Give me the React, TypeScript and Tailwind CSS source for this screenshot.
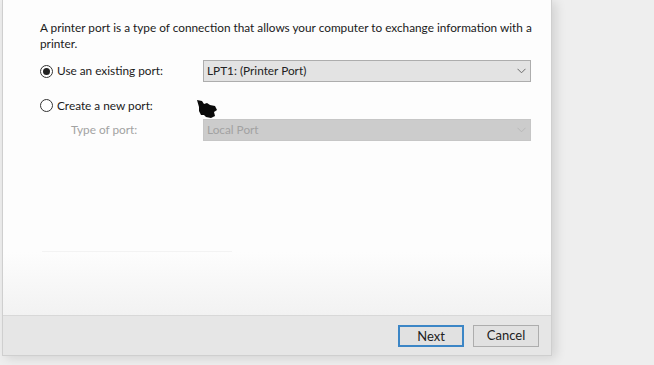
import React from 'react';

function Radio({ checked }: { checked?: boolean }) {
  return (
    <span className="flex h-[13px] w-[13px] items-center justify-center rounded-full border border-[#333] bg-white">
      {checked && <span className="h-[7px] w-[7px] rounded-full bg-[#222]" />}
    </span>
  );
}

function Chevron({ color }: { color: string }) {
  return (
    <svg width="9" height="6" viewBox="0 0 9 6" fill="none">
      <path d="M0.5 0.8 L4.5 4.8 L8.5 0.8" stroke={color} strokeWidth="1" />
    </svg>
  );
}

function Select({ value, disabled }: { value: string; disabled?: boolean }) {
  return (
    <div
      className={`flex h-[22px] w-[328px] items-center justify-between border pl-[3px] pr-[4px] ${
        disabled ? 'border-[#c6c6c6] bg-[#cccccc] text-[#a2a2a2]' : 'border-[#adadad] bg-[#e3e3e3] text-[#222]'
      }`}
    >
      <span>{value}</span>
      <Chevron color={disabled ? '#b8b8b8' : '#6a6a6a'} />
    </div>
  );
}

export default function App() {
  return (
    <div
      className="relative h-[365px] w-[654px] overflow-hidden bg-[#eeeeee] text-[11.8px] text-[#1a1a1a]"
      style={{ fontFamily: 'Lato, "Noto Sans", sans-serif' }}
    >
      <div className="ml-[2px] flex h-[356px] w-[550px] flex-col border-l border-r border-b border-[#cfcfcf] bg-[#fdfdfd] shadow-[4px_2px_10px_rgba(0,0,0,0.12)]">
        <div className="flex flex-1 flex-col bg-gradient-to-b from-[#fdfdfd] from-80% to-[#f2f2f2] pl-[37px] pt-[20px]">
          <p className="w-[496px] leading-[16px]">
            A printer port is a type of connection that allows your computer to exchange information with a printer.
          </p>

          <div className="mt-[8px] flex items-center">
            <Radio checked />
            <span className="ml-[4px] w-[146px]">Use an existing port:</span>
            <Select value="LPT1: (Printer Port)" />
          </div>

          <div className="mt-[15px] flex items-center">
            <Radio />
            <span className="ml-[4px]">Create a new port:</span>
          </div>

          <div className="mt-[4px] flex items-center">
            <span className="ml-[31px] w-[132px] text-[#a2a2a2]">Type of port:</span>
            <Select value="Local Port" disabled />
          </div>

          <div className="ml-[2px] mt-[110px] h-px w-[190px] bg-[#f3f3f3]" />
        </div>

        <div className="flex h-[40px] items-center justify-end gap-[9px] border-t border-[#d8d8d8] bg-[#e6e6e6] pr-[12px]">
          <button className="h-[22px] w-[66px] border-2 border-[#3c86c6] bg-[#e1e1e1] text-[13px] text-[#222]">
            Next
          </button>
          <button className="h-[22px] w-[66px] border border-[#adadad] bg-[#e1e1e1] text-[13px] text-[#222]">
            Cancel
          </button>
        </div>
      </div>

      {/* mouse cursor blob */}
      <svg className="absolute left-[197px] top-[100px]" width="22" height="20" viewBox="0 0 22 20">
        <path
          d="M0 0 L5 1 L7 4 L10 3 L13 5 L18 6 L20 10 L17 12 L18 16 L14 18 L9 17 L7 15 L4 15 L2 11 L2 7 Z"
          fill="#0a0a0a"
        />
      </svg>
    </div>
  );
}
